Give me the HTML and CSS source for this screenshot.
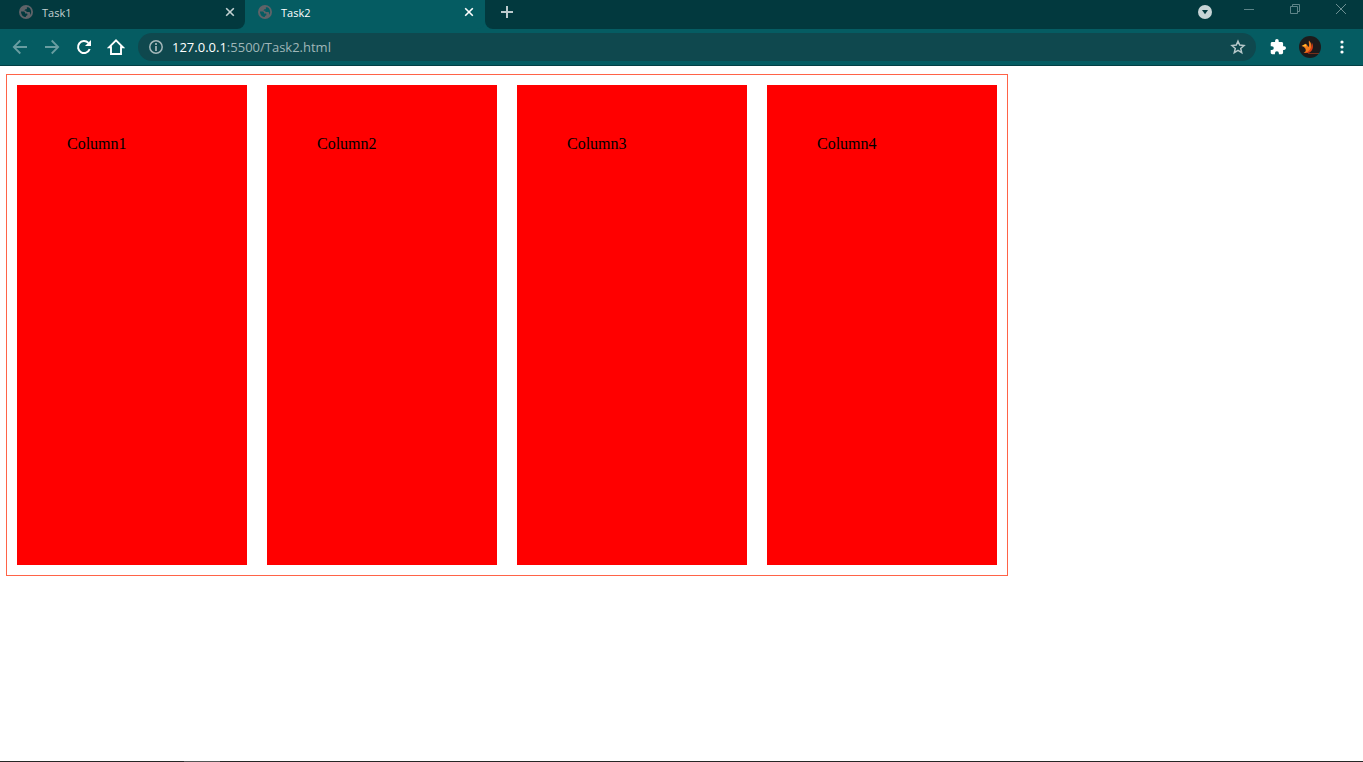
FILE: index.html
```html
<!DOCTYPE html>
<html lang="en">
<head>
<meta charset="utf-8">
<meta name="viewport" content="width=device-width, initial-scale=1">
<title>Task2</title>
<link rel="stylesheet" href="styles.css">
</head>
<body>
<svg class="symbols" aria-hidden="true">
  <symbol id="globe" viewBox="0 0 14 14">
    <circle cx="7" cy="7" r="7" fill="#5f6368"/>
    <path d="M2 6.400h2.400c1 0 1.600.6 1.600 1.400v.8h1.600c.7 0 .8.5.8 1.100s-.6 1-1.500 1v1.400C4.400 12 2 9.900 2 6.400ZM7.500 2c2.700 0 4.700 2 4.700 4.900 0 1.100-.4 2.200-1.100 3V8.300c0-.8-.5-1.200-1.300-1.200H7.400V5.700H5.600c0-1 .5-1.500 1.500-1.500.6 0 .8-.4.800-1V2Z" fill="var(--tab-fill)"/>
  </symbol>
  <symbol id="close" viewBox="0 0 10 10">
    <path d="m1.200 1.200 7.600 7.600m0-7.600L1.200 8.800" stroke="currentColor" stroke-width="1.600" fill="none"/>
  </symbol>
</svg>

<header class="browser">
  <div class="tab-strip">
    <nav class="tabs" aria-label="Tabs">
      <div class="tab">
        <button class="tab-title" type="button"><svg class="favicon" aria-hidden="true"><use href="#globe"/></svg>Task1</button>
        <button class="tab-close" type="button" aria-label="Close Task1"><svg width="10" height="10"><use href="#close"/></svg></button>
      </div>
      <div class="tab tab-active">
        <button class="tab-title" type="button"><svg class="favicon" aria-hidden="true"><use href="#globe"/></svg>Task2</button>
        <button class="tab-close" type="button" aria-label="Close Task2"><svg width="10" height="10"><use href="#close"/></svg></button>
      </div>
    </nav>
    <div class="strip-rest">
      <button class="new-tab" type="button" aria-label="New tab"><svg width="12" height="12" viewBox="0 0 12 12"><path d="M6 0v12M0 6h12" stroke="#bccbcd" stroke-width="2"/></svg></button>
      <div class="window-controls">
        <button class="search-tabs" type="button" aria-label="Search tabs"><svg width="14" height="14" viewBox="0 0 14 14"><circle cx="7" cy="7" r="7" fill="#c7d4d6"/><path d="M4 5h6L7 9.200Z" fill="#02393e"/></svg></button>
        <button class="window-button" type="button" aria-label="Minimize"><svg width="10" height="10" viewBox="0 0 10 10"><path d="M0 5.500h10" stroke="#5e8488"/></svg></button>
        <button class="window-button" type="button" aria-label="Restore"><svg width="10" height="10" viewBox="0 0 10 10"><path d="M.5 2.500h7v7h-7ZM2.500 2.500v-2h7v7h-2" fill="none" stroke="#5e8488"/></svg></button>
        <button class="window-button" type="button" aria-label="Close window"><svg width="10" height="10" viewBox="0 0 10 10"><path d="m0 0 10 10M10 0 0 10" stroke="#6d9093"/></svg></button>
      </div>
    </div>
  </div>

  <div class="toolbar">
    <button class="tool" type="button" aria-label="Back"><svg width="16" height="16" viewBox="0 0 16 16"><path d="M15 8H2M8.300 1.500 1.800 8l6.500 6.500" fill="none" stroke="#699da1" stroke-width="1.800"/></svg></button>
    <button class="tool" type="button" aria-label="Forward"><svg width="16" height="16" viewBox="0 0 16 16"><path d="M1 8h13M7.700 1.500 14.200 8l-6.500 6.500" fill="none" stroke="#699da1" stroke-width="1.800"/></svg></button>
    <button class="tool" type="button" aria-label="Reload"><svg width="16" height="16" viewBox="0 0 16 16"><path d="M13.700 10A6 6 0 1 1 12.400 3.900" fill="none" stroke="#fff" stroke-width="2"/><path d="M15 1v6H9Z" fill="#fff"/></svg></button>
    <button class="tool" type="button" aria-label="Home"><svg width="18" height="18" viewBox="0 0 18 18"><path d="M2 9.300 9 2.300l7 7H14V16H4V9.300Z" fill="none" stroke="#fff" stroke-width="1.900"/></svg></button>
    <div class="address-bar">
      <button class="site-info" type="button" aria-label="Site information"><svg width="14" height="14" viewBox="0 0 14 14"><circle cx="7" cy="7" r="6.200" fill="none" stroke="#a5b8ba" stroke-width="1.500"/><path d="M7 6v5M7 3v2" stroke="#a5b8ba" stroke-width="1.700"/></svg></button>
      <div class="address" role="textbox" contenteditable="true" spellcheck="false" aria-label="Address"><span class="host">127.0.0.1</span>:5500/Task2.html</div>
      <button class="bookmark" type="button" aria-label="Bookmark this page"><svg width="16" height="16" viewBox="0 0 16 16"><path d="m8 2.200 1.700 3.900 4.300.4-3.300 2.900 1 4.200L8 11.400l-3.700 2.200 1-4.200L2 6.500l4.300-.4Z" fill="none" stroke="#b7c8ca" stroke-width="1.500"/></svg></button>
    </div>
    <div class="tool-group">
      <button class="tool" type="button" aria-label="Extensions"><svg width="16" height="16" viewBox="1 1 22 22"><path d="M20.500 11H19V7c0-1.100-.9-2-2-2h-4V3.500a2.500 2.500 0 0 0-5 0V5H4c-1.100 0-2 .9-2 2v3.800h1.500a2.700 2.700 0 0 1 0 5.400H2V20c0 1.100.9 2 2 2h3.800v-1.500a2.700 2.700 0 0 1 5.400 0V22H17c1.100 0 2-.9 2-2v-4h1.500a2.500 2.500 0 0 0 0-5Z" fill="#fff"/></svg></button>
      <button class="tool" type="button" aria-label="Profile"><svg width="22" height="22" viewBox="0 0 22 22"><circle cx="11" cy="11" r="11" fill="#1d1b1b"/><path d="M2.500 10 6.500 7.700c1.500.3 1.800 2 2.800 3.300C11.200 9.500 9.200 7 10 4.500c2.500 2.500 3 5.500 2 8.500-1 2.800-4 4.500-7.500 4 2-1 3-2.500 1.800-4.500-.8-1.300-1.800-2-3.800-2.500Z" fill="#ef7a1c"/><path d="M12.800 6.500c2 3.500 1.200 7.500-1.300 9.200-1.800 1.400-3.500 1.600-5.500 1.300 4.500-1.500 7-5 6.800-10.500Z" fill="#d93c16"/><path d="M3.200 9.700 6.500 8.200c1 .5.700 1.300.5 2.300Z" fill="#ffc02d"/><path d="M9 17.500h11" stroke="#73301c"/></svg></button>
      <button class="tool" type="button" aria-label="Menu"><svg width="4" height="14" viewBox="0 0 4 14"><g fill="#fff"><circle cx="2" cy="2" r="1.600"/><circle cx="2" cy="7" r="1.600"/><circle cx="2" cy="12" r="1.600"/></g></svg></button>
    </div>
  </div>
</header>

<main class="page">
  <div class="columns">
    <section class="column">Column1</section>
    <section class="column">Column2</section>
    <section class="column">Column3</section>
    <section class="column">Column4</section>
  </div>
</main>
<footer class="taskbar"><span class="taskbar-item"></span></footer>
</body>
</html>
```
FILE: styles.css
```css
* {
  box-sizing: border-box;
}

body {
  --strip: #02393e;
  --teal: #055c62;
  display: flex;
  flex-direction: column;
  min-height: 100vh;
  margin: 0;
  background: #fff;
}

.symbols {
  display: none;
}

.browser {
  background: var(--teal);
  font-family: "Open Sans", "Noto Sans", sans-serif;
}

button {
  display: flex;
  align-items: center;
  justify-content: center;
  padding: 0;
  border: 0;
  background: none;
  color: inherit;
  font: inherit;
}

.tab-strip,
.tabs,
.window-controls,
.tool-group {
  display: flex;
}

.tab-strip {
  height: 29px;
}

.tab {
  --tab-fill: var(--strip);
  display: flex;
  align-items: center;
  width: 245px;
  padding: 0 10px 5px 19px;
  border-bottom-right-radius: 8px;
  background: var(--strip);
  color: #c4d1d2;
  font-size: 11px;
}

.tab-active {
  --tab-fill: var(--teal);
  width: 240px;
  padding-right: 11px;
  padding-left: 13px;
  background: var(--teal);
  color: #fff;
}

.tab-title {
  flex: 1;
  justify-content: flex-start;
  gap: 9px;
}

.favicon {
  width: 14px;
  height: 14px;
}

.strip-rest {
  display: flex;
  flex: 1;
  justify-content: space-between;
  padding: 0 0 5px 16px;
  border-bottom-left-radius: 8px;
  background: var(--strip);
}

.search-tabs {
  width: 14px;
  margin-right: 14px;
}

.window-button {
  width: 46px;
  height: 18px;
}

.window-controls .window-button:last-child {
  margin-right: -1px;
}

.toolbar {
  display: flex;
  align-items: center;
  height: 37px;
  padding: 0 5px 0 4px;
  border-bottom: 1px solid #033f44;
}

.tool {
  width: 32px;
  height: 28px;
}

.address-bar {
  display: flex;
  flex: 1;
  align-items: center;
  height: 28px;
  margin-left: 6px;
  padding: 0 10px 0 11px;
  border-radius: 14px;
  background: #0f484e;
}

.address {
  flex: 1;
  margin-left: 9px;
  color: #9fb6b8;
  font-size: 13px;
  line-height: 20px;
  white-space: nowrap;
  outline: 0;
}

.host {
  color: #fff;
}

.tool-group {
  margin-left: 6px;
}

.page {
  flex: 1;
  padding: 8px 6px;
}

.columns {
  display: flex;
  gap: 20px;
  max-width: 1002px;
  padding: 10px;
  border: 1px solid tomato;
}

.column {
  flex: 1;
  min-height: 480px;
  padding: 50px;
  background: red;
  color: #000;
  font-family: "Liberation Serif", "Times New Roman", serif;
  font-size: 16px;
}

.taskbar {
  display: flex;
  height: 1px;
  padding-left: 184px;
  background: #262626;
}

.taskbar-item {
  width: 36px;
  background: #565656;
}
```
